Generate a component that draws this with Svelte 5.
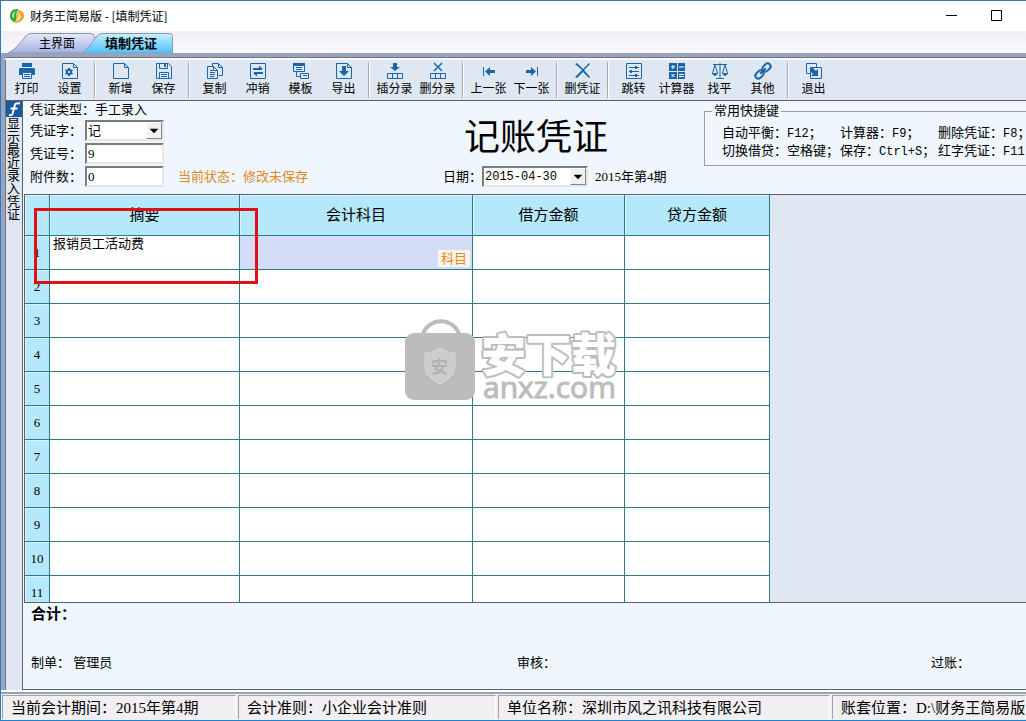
<script lang="ts">
  type Tool = { label: string; icon: string };
  type Shortcut = { label: string; key: string };

  const toolGroups: Tool[][] = [
    [
      { label: "打印", icon: "print" },
      { label: "设置", icon: "setup" },
    ],
    [
      { label: "新增", icon: "add" },
      { label: "保存", icon: "save" },
    ],
    [
      { label: "复制", icon: "copy" },
      { label: "冲销", icon: "reverse" },
      { label: "模板", icon: "template" },
      { label: "导出", icon: "export" },
    ],
    [
      { label: "插分录", icon: "insertRow" },
      { label: "删分录", icon: "deleteRow" },
    ],
    [
      { label: "上一张", icon: "prev" },
      { label: "下一张", icon: "next" },
    ],
    [{ label: "删凭证", icon: "remove" }],
    [
      { label: "跳转", icon: "jump" },
      { label: "计算器", icon: "calc" },
      { label: "找平", icon: "balance" },
      { label: "其他", icon: "other" },
    ],
    [{ label: "退出", icon: "exit" }],
  ];

  const shortcuts: Shortcut[] = [
    { label: "自动平衡：", key: "F12" },
    { label: "计算器：", key: "F9" },
    { label: "删除凭证：", key: "F8" },
    { label: "切换借贷：空格键", key: "" },
    { label: "保存：", key: "Ctrl+S" },
    { label: "红字凭证：", key: "F11" },
  ];

  const statusItems = [
    "当前会计期间：2015年第4期",
    "会计准则：小企业会计准则",
    "单位名称：深圳市风之讯科技有限公司",
    "账套位置：D:\\财务王简易版",
  ];

  const rows = Array.from({ length: 11 }, (_, i) => i + 1);

  let voucherNo = $state("9");
  let attachments = $state("0");
</script>

{#snippet toolIcon(name: string)}
  <svg class="tool-icon" viewBox="0 0 18 18" aria-hidden="true">
    {#if name === "print"}
      <path class="solid" d="M4 1h10v4H4zM2 6h14l1 1v6h-3v-3H4v3H1V7z" />
      <path d="M4.500 10.500h9v6h-9zM6 12.500h6M6 14.500h6" />
    {:else if name === "setup"}
      <path d="M1.500 1.500h11l4 4v11h-15zM12.500 1.500v4h4" />
      <path class="bold" d="M8 6v8M4.500 8l7 4M11.500 8l-7 4" />
      <circle class="bold" cx="8" cy="10" r="2" fill="#fff" />
    {:else if name === "add"}
      <path d="M1.500 1.500h11l4 4v11h-15zM12.500 1.500v4h4" />
    {:else if name === "save"}
      <path d="M1.500 1.500h12l3 3v12h-15zM4.500 1.500v5h8v-5M4.500 16.500v-6h9v6M6 12.500h6M6 14.500h6" />
      <path class="solid" d="M9 2h2v3H9z" />
    {:else if name === "copy"}
      <path d="M6.500 4V1.500h6l4 4v8h-4" />
      <path d="M12.500 1.500v4h4M1.500 4.500h6l4 4v8h-10zM7.500 4.500v4h4M4 8.500h3M4 10.500h5M4 12.500h5M4 14.500h4" />
    {:else if name === "reverse"}
      <path d="M1.500 1.500h15v15h-15z" />
      <path class="bold" d="M4 7h9M5 11h9" />
      <path class="solid" d="M10 3.500L14 7h-4zM8 14.500L4 11h4z" />
    {:else if name === "template"}
      <path d="M1.500 1.500h11v8h-11zM4 5.500h6M4 7.500h6M4.500 10v4.500h4M8.500 11.500h8v5h-8zM11 13.500h4" />
      <path class="solid" d="M1 1h12v3H1z" />
    {:else if name === "export"}
      <path d="M1.500 1.500h11l4 4v11h-15zM12.500 1.500v4h4" />
      <path class="solid" d="M7 4h4v5h3l-5 5-5-5h3z" />
    {:else if name === "insertRow"}
      <path class="solid" d="M7 1h4v4h3L9 9 4 5h3z" />
      <path d="M1.500 11.500h15v5h-15zM6.500 11.500v5M11.500 11.500v5" />
    {:else if name === "deleteRow"}
      <path class="mid" d="M5 1l8 8M13 1L5 9" />
      <path d="M1.500 11.500h15v5h-15zM6.500 11.500v5M11.500 11.500v5" />
    {:else if name === "prev"}
      <path d="M3.500 5v9" />
      <path class="solid" d="M5 9.500L10 5v3h5v3h-5v3z" />
    {:else if name === "next"}
      <path d="M14.500 5v9" />
      <path class="solid" d="M13 9.500L8 5v3H3v3h5v3z" />
    {:else if name === "remove"}
      <path class="solid" d="M1 2l2-1 6 6 6-6 1 1-6 6 6 7-1 1-6-6-6 6-2-1 7-7z" />
    {:else if name === "jump"}
      <path d="M1.500 1.500h15v15h-15zM4 5.500h10M4 9.500h10M4 13.500h10" />
      <path class="solid" d="M10 4h2v3h-2zM5 8h2v3H5zM10 12h2v3h-2z" />
    {:else if name === "calc"}
      <path class="solid" d="M1 1h8v8H1zM10 1h7v8h-7zM1 10h8v7H1zM10 10h7v7h-7z" />
      <path class="light" d="M3 5h4M5 3v4M11 5h5M3.500 12l3 3M6.500 12l-3 3M11 12.500h5M11 14.500h5" />
    {:else if name === "balance"}
      <path d="M9 1v15M2 2.500h14M5 16.500h8M4 3L1.500 11M4 3l2.500 8M14 3l-2.500 8M14 3l2.500 8" />
      <path class="solid" d="M1 11h6q-1 3-3 3t-3-3zM11 11h6q-1 3-3 3t-3-3z" />
    {:else if name === "other"}
      <g transform="rotate(-45 9 9)">
        <rect class="bold" x="-0.500" y="6" width="9" height="6" rx="3" />
        <rect class="bold" x="9.500" y="6" width="9" height="6" rx="3" />
        <path class="bold" d="M5 9h8" />
      </g>
    {:else if name === "exit"}
      <path d="M5 11.500H1.500v-10h10V5M5.500 5.500h11v11h-11z" />
      <path class="solid" d="M5 6l2-1 4 4 2-2v7H6l2-2-3-3z" />
    {/if}
  </svg>
{/snippet}

<div class="window">
  <header class="titlebar">
    <svg class="logo" viewBox="0 0 14 14" aria-hidden="true">
      <path d="M7 0Q0 0 0 7q0 4 4 6 3-1 2.500-6T9 1Q8 0 7 0z" fill="#36a33a" />
      <path d="M9 1q5 1 5 6t-7 7q-2 0-3-1 3-1 3-6 0-4 2-6z" fill="#f1a51e" />
      <path d="M6 2Q2 3 2 7l2 3Q4 4 6 2z" fill="#b6e09a" />
      <path d="M9 3q-1 2-1 5-1 3-2 5 4-2 5-6z" fill="#fbe3a6" />
    </svg>
    <h1>财务王简易版 - [填制凭证]</h1>
    <div class="window-buttons">
      <button aria-label="最小化"><svg viewBox="0 0 11 11"><path d="M0 5.500h11" /></svg></button>
      <button aria-label="最大化"><svg viewBox="0 0 11 11"><path d="M.5.5h10v10H.5z" /></svg></button>
    </div>
  </header>

  <nav class="tabs">
    <button class="tab">
      <svg viewBox="0 0 92 20" aria-hidden="true">
        <defs>
          <linearGradient id="idle" x2="0" y2="1">
            <stop offset="0" stop-color="#e4e9fb" />
            <stop offset="1" stop-color="#a4b0e2" />
          </linearGradient>
        </defs>
        <path d="M1 20C8 17 15 8 19 3q2-2.500 6-2.500h58q4 0 5 4V20z" fill="url(#idle)" stroke="#8b93a5" />
      </svg>
      <span>主界面</span>
    </button>
    <button class="tab active">
      <svg viewBox="0 0 92 20" aria-hidden="true">
        <defs>
          <linearGradient id="current" x2="0" y2="1">
            <stop offset="0" stop-color="#c9f0ff" />
            <stop offset="1" stop-color="#4fc2fb" />
          </linearGradient>
        </defs>
        <path d="M1 20C7 17 12 8 16 3q2-2.500 6-2.500h67q2.500 0 2.500 3V20z" fill="url(#current)" stroke="#7f9db0" />
      </svg>
      <span>填制凭证</span>
    </button>
  </nav>

  <div class="frame">
    <div class="toolbar">
      {#each toolGroups as group}
        <div class="tool-group">
          {#each group as tool}
            <button class="tool">
              {@render toolIcon(tool.icon)}
              <span>{tool.label}</span>
            </button>
          {/each}
        </div>
      {/each}
    </div>

    <div class="workspace">
      <aside class="side">
        <svg viewBox="0 0 16 16" aria-hidden="true">
          <rect width="16" height="16" fill="#175a9e" />
          <path d="M14 2.500q-4-1-5 1L6.500 13Q6 14.500 3 14M4.500 7.500h7" fill="none" stroke="#fff" stroke-width="2" />
        </svg>
        <button>显示最近录入凭证</button>
      </aside>

      <main class="voucher">
        <section class="head">
          <div class="fields">
            <p class="kind">凭证类型：手工录入</p>
            <div class="field">
              <label for="word">凭证字：</label>
              <span class="combo">
                <select id="word"><option>记</option></select>
                <svg viewBox="0 0 16 16" aria-hidden="true"><path d="M3 6h10l-5 5z" /></svg>
              </span>
            </div>
            <div class="field">
              <label for="number">凭证号：</label>
              <input id="number" type="text" bind:value={voucherNo} />
            </div>
            <div class="field">
              <label for="attach">附件数：</label>
              <input id="attach" type="text" bind:value={attachments} />
              <span class="state">当前状态：修改未保存</span>
            </div>
          </div>

          <div class="center">
            <h2>记账凭证</h2>
            <div class="date">
              <label for="date">日期：</label>
              <span class="combo">
                <select id="date"><option>2015-04-30</option></select>
                <svg viewBox="0 0 16 16" aria-hidden="true"><path d="M3 6h10l-5 5z" /></svg>
              </span>
              <span class="period">2015年第4期</span>
            </div>
          </div>

          <fieldset>
            <legend>常用快捷键</legend>
            <div class="shortcuts">
              {#each shortcuts as { label, key }}
                <span>{label}{#if key}<kbd>{key}</kbd>{/if}{key === "F11" ? "" : "；"}</span>
              {/each}
            </div>
          </fieldset>
        </section>

        <section class="entries">
          <table>
            <colgroup>
              <col class="c-no" />
              <col class="c-summary" />
              <col class="c-account" />
              <col class="c-debit" />
              <col class="c-credit" />
            </colgroup>
            <thead>
              <tr>
                <th></th>
                <th>摘要</th>
                <th>会计科目</th>
                <th>借方金额</th>
                <th>贷方金额</th>
              </tr>
            </thead>
            <tbody>
              {#each rows as n}
                <tr>
                  <th scope="row">{n}</th>
                  <td>{n === 1 ? "报销员工活动费" : ""}</td>
                  <td class:selected={n === 1}>
                    {#if n === 1}<button class="pick">科目</button>{/if}
                  </td>
                  <td></td>
                  <td></td>
                </tr>
              {/each}
            </tbody>
          </table>
          <div class="marker"></div>
          <svg class="watermark" viewBox="0 0 216 84" aria-hidden="true">
            <path d="M17 18C22-3 50-3 55 18" fill="none" stroke="#bcbcbc" stroke-width="4" />
            <rect x="0" y="14" width="70" height="67" rx="9" fill="#bcbcbc" />
            <path d="M35 29q7 5 15 5v14q0 10-15 17-15-7-15-17V34q8 0 15-5z" fill="#cdcdcd" stroke="#d6d6d6" />
            <text class="mark-small" x="26" y="54">安</text>
            <text class="mark-name" x="76" y="53">安下载</text>
            <text class="mark-site" x="78" y="79">anxz.com</text>
          </svg>
        </section>

        <section class="foot">
          <p class="total">合计：</p>
          <div class="signers">
            <span>制单： 管理员</span>
            <span>审核：</span>
            <span>过账：</span>
          </div>
        </section>
      </main>
    </div>
  </div>

  <footer class="statusbar">
    {#each statusItems as item}
      <span>{item}</span>
    {/each}
  </footer>
</div>

<style>
  :global(body) {
    margin: 0;
    overflow: hidden;
  }

  .window {
    --song: "Liberation Serif", "Noto Sans CJK SC", sans-serif;
    --dark: #5c6168;
    --panel: #dfe8f2;
    --form: #eff6fd;
    --line: #2b7a87;
    --blue: #1b66a9;
    display: flex;
    flex-direction: column;
    height: 100vh;
    box-sizing: border-box;
    border-top: 1px solid #3f76a3;
    border-left: 1px solid #2c7cc4;
    border-bottom: 1px solid #1883d7;
    background: #f1eff2;
    color: #000;
    font: 13px/18px var(--song);
    white-space: nowrap;
    overflow: hidden;
  }

  button,
  input,
  select {
    font: inherit;
    color: inherit;
    box-sizing: border-box;
  }
  button {
    padding: 0;
    border: 0;
    background: none;
  }
  h1,
  h2,
  p {
    margin: 0;
    font-weight: 400;
  }

  .titlebar {
    display: flex;
    align-items: center;
    height: 30px;
    flex: none;
    padding-left: 9px;
    background: #fff;
  }
  .logo {
    width: 14px;
    height: 14px;
  }
  h1 {
    margin-left: 6px;
    font: 12px/18px "Noto Sans CJK SC", sans-serif;
  }
  .window-buttons {
    display: flex;
    margin-left: auto;
    padding-right: 7px;
  }
  .window-buttons button {
    width: 45px;
    height: 30px;
  }
  .window-buttons svg {
    display: block;
    width: 11px;
    height: 11px;
    margin: 0 auto 2px;
    fill: none;
    stroke: #000;
  }

  .tabs {
    display: flex;
    align-items: flex-end;
    height: 22px;
    flex: none;
    padding-left: 6px;
    background: linear-gradient(#f1eff2, #faf8fc);
  }
  .tab {
    position: relative;
    width: 92px;
    height: 20px;
    padding-left: 8px;
    font: 12px/20px "Noto Sans CJK SC", sans-serif;
  }
  .tab.active {
    margin-left: -18px;
    font-size: 13px;
    font-weight: 700;
  }
  .tab svg {
    position: absolute;
    inset: 0;
    width: 100%;
    height: 100%;
  }
  .tab span {
    position: relative;
  }

  .frame {
    display: flex;
    flex-direction: column;
    flex: 1;
    min-height: 0;
    border-top: 4px solid #97a3bf;
    border-left: 4px solid #97a3bf;
    background: var(--panel);
    box-shadow: inset 1px 1px #74747c;
  }

  .toolbar {
    display: flex;
    height: 43px;
    flex: none;
    box-sizing: border-box;
    margin-top: 1px;
    padding-top: 2px;
    border-top: 2px solid #f7f9fc;
    border-bottom: 1px solid var(--dark);
  }
  .tool-group {
    display: flex;
    height: 36px;
  }
  .tool-group + .tool-group {
    margin-left: 3px;
    padding-left: 4px;
    border-left: 1px solid #a3a9b0;
    box-shadow: inset 1px 0 #fff;
  }
  .tool {
    display: flex;
    flex-direction: column;
    align-items: center;
    width: 43px;
    height: 36px;
    font: 12px/16px "Noto Sans CJK SC", sans-serif;
  }
  .tool-icon {
    width: 18px;
    height: 18px;
    flex: none;
    fill: none;
    stroke: var(--blue);
    stroke-width: 1;
  }
  .tool-icon .solid {
    fill: var(--blue);
    stroke: none;
  }
  .tool-icon .mid {
    stroke-width: 1.5;
  }
  .tool-icon .bold {
    stroke-width: 2;
  }
  .tool-icon .light {
    stroke: #fff;
  }

  .workspace {
    display: flex;
    flex: 1;
    min-height: 0;
    margin-left: 1px;
    padding-bottom: 2px;
  }
  .side {
    width: 16px;
    flex: none;
  }
  .side svg {
    display: block;
    width: 16px;
    height: 16px;
  }
  .side button {
    writing-mode: vertical-rl;
    font: 13px/14px "Noto Sans CJK SC", sans-serif;
  }

  .voucher {
    display: flex;
    flex-direction: column;
    flex: 1;
    min-width: 0;
    border-left: 1px solid var(--dark);
    border-bottom: 1px solid var(--dark);
    background: var(--form);
  }
  .head {
    display: grid;
    grid-template-columns: minmax(0, 1fr) 261px 322px;
    height: 93px;
    flex: none;
    padding-left: 7px;
  }
  .kind {
    line-height: 18px;
  }
  .field {
    display: flex;
    align-items: center;
    height: 23px;
  }
  .field label {
    width: 55px;
  }
  input,
  select {
    width: 79px;
    height: 21px;
    padding: 0 1px;
    border: 2px solid;
    border-color: #7b7b7b #e6e6e6 #e6e6e6 #7b7b7b;
    border-radius: 0;
    background: #fff;
    outline: 0;
  }
  select {
    display: block;
    appearance: none;
  }
  .combo {
    position: relative;
  }
  .combo svg {
    position: absolute;
    top: 2px;
    right: 2px;
    width: 14px;
    height: 15px;
    border: 1px solid;
    border-color: #fff #858585 #858585 #fff;
    background: #f0f0f0;
    pointer-events: none;
  }
  .state {
    margin-left: 14px;
    color: #dd8a1f;
  }

  h2 {
    margin-top: 9px;
    padding-left: 21px;
    font: 36px/48px "Noto Sans CJK SC", sans-serif;
  }
  .date {
    display: flex;
    align-items: center;
    margin-top: 8px;
  }
  .date label {
    width: 39px;
  }
  .date select {
    width: 106px;
    font: 12px/16px "Liberation Mono", monospace;
  }
  .period {
    margin-left: 7px;
  }

  fieldset {
    height: 64px;
    box-sizing: border-box;
    margin: 1px 0 0;
    padding: 4px 0 0 17px;
    border: 1px solid #9b9fa3;
    border-right: 0;
    min-width: 0;
    overflow: hidden;
  }
  legend {
    margin-left: -10px;
    padding: 0 2px;
  }
  .shortcuts {
    display: grid;
    grid-template-columns: 118px 98px 1fr;
  }
  kbd {
    font: 12px/16px "Liberation Mono", monospace;
  }

  .entries {
    position: relative;
    flex: 1;
    min-height: 0;
    overflow: hidden;
    margin-left: 1px;
    border-top: 1px solid var(--dark);
    border-left: 1px solid var(--dark);
    border-bottom: 1px solid var(--dark);
    background: var(--panel);
  }
  table {
    width: 745px;
    table-layout: fixed;
    border-collapse: separate;
    border-spacing: 0;
    background: #fff;
  }
  .c-no {
    width: 25px;
  }
  .c-summary {
    width: 190px;
  }
  .c-account {
    width: 233px;
  }
  .c-debit {
    width: 152px;
  }
  .c-credit {
    width: 145px;
  }
  th,
  td {
    box-sizing: border-box;
    height: 34px;
    padding: 0;
    border-right: 1px solid var(--line);
    border-bottom: 1px solid var(--line);
  }
  th {
    background: #b5e8fb;
    font-weight: 400;
    box-shadow: inset 1px 1px #dcf4fd;
  }
  thead th {
    height: 41px;
    font-size: 15px;
  }
  td {
    padding: 0 0 0 3px;
    vertical-align: top;
    line-height: 16px;
  }
  .selected {
    padding: 14px 2px 0 0;
    background: #d3ddf8;
    text-align: right;
  }
  .pick {
    width: 32px;
    height: 17px;
    background: #fbf5ec;
    color: #e08a1c;
    line-height: 17px;
  }
  .marker {
    position: absolute;
    left: 9px;
    top: 13px;
    width: 218px;
    height: 70px;
    border: 3px solid #e01014;
    pointer-events: none;
  }
  .watermark {
    position: absolute;
    left: 380px;
    top: 124px;
    width: 216px;
    height: 84px;
    pointer-events: none;
  }
  .mark-small {
    font: 700 17px "Noto Sans CJK SC", sans-serif;
    fill: #b0b0b0;
  }
  .mark-name {
    font: 900 45px "Noto Sans CJK SC", sans-serif;
    fill: #fff;
    stroke: #bdbdbd;
    stroke-width: 4;
    stroke-linejoin: round;
    paint-order: stroke;
  }
  .mark-site {
    font: 30px "Open Sans", sans-serif;
    fill: #bcbcbc;
    stroke: #bcbcbc;
  }

  .foot {
    height: 86px;
    flex: none;
    box-sizing: border-box;
    padding: 1px 0 0 8px;
  }
  .total {
    font: 700 15px/20px var(--song);
  }
  .signers {
    display: grid;
    grid-template-columns: 486fr 414fr 95fr;
    margin-top: 30px;
  }

  .statusbar {
    display: grid;
    grid-template-columns: 234px 258px 332px 1fr;
    gap: 2px;
    height: 24px;
    flex: none;
    padding: 1px 0 1px 1px;
    border-top: 2px solid #9aa3b3;
    background: #f1eff2;
    box-shadow: 0 -2px #fff;
    z-index: 1;
  }
  .statusbar span {
    min-width: 0;
    padding-left: 8px;
    border-top: 1px solid #a0a0a0;
    border-left: 1px solid #a0a0a0;
    border-right: 1px solid #fff;
    font-size: 15px;
    line-height: 24px;
    overflow: hidden;
  }
</style>
